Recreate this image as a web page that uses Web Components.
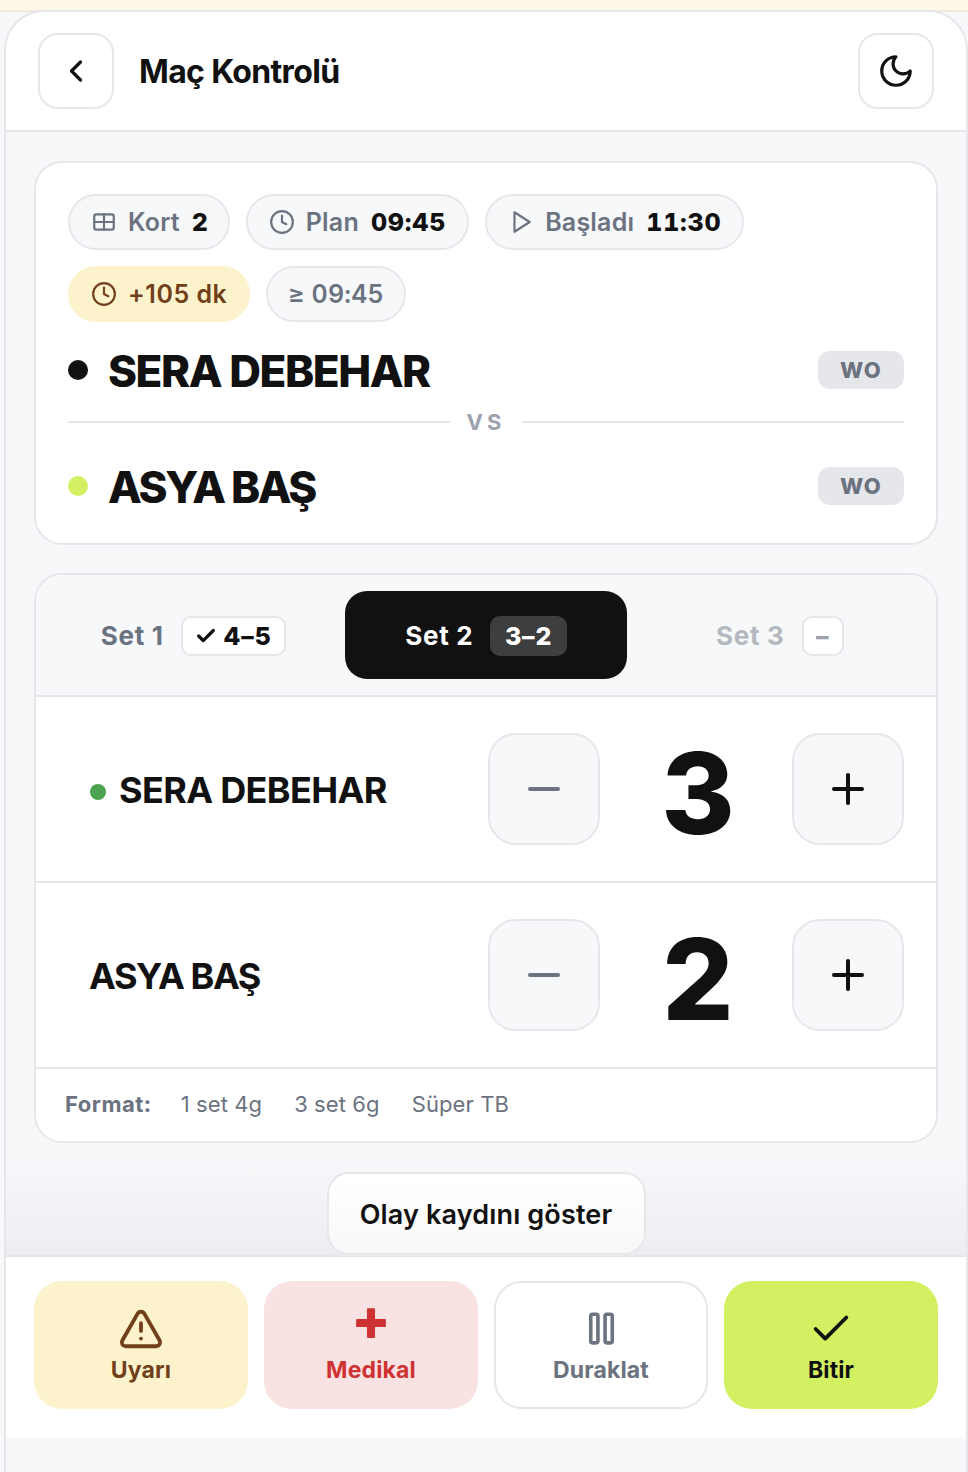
<!DOCTYPE html>
<html lang="tr">
<head>
<meta charset="utf-8">
<title>Maç Kontrolü</title>
<style>
html, body { margin: 0; padding: 0; background: #f7f8fa; }
body { font-family: Inter, "Liberation Sans", sans-serif; color: #111; }
</style>
</head>
<body>
<app-shell>
  <top-bar slot="head" title-text="Maç Kontrolü"></top-bar>

  <match-card>
    <info-chip slot="chips" icon="court" label="Kort" value="2" style="padding-right:19px"></info-chip>
    <info-chip slot="chips" icon="clock" label="Plan" value="09:45"></info-chip>
    <info-chip slot="chips" icon="play" label="Başladı" value="11:30"></info-chip>
    <info-chip slot="chips" tone="warn" icon="clock" label="+105 dk"></info-chip>
    <info-chip slot="chips" label="≥ 09:45" style="padding:0 20px"></info-chip>
    <player-line slot="one" dot="#111111" name="SERA DEBEHAR" style="--track:-1.45px"></player-line>
    <player-line slot="two" dot="#d2f062" name="ASYA BAŞ" style="--track:-2.4px"></player-line>
  </match-card>

  <score-card>
    <set-tab slot="tab1" label="Set 1" score="4–5" done></set-tab>
    <set-tab slot="tab2" label="Set 2" score="3–2" active></set-tab>
    <set-tab slot="tab3" label="Set 3" score="–" muted></set-tab>
    <score-row name="SERA DEBEHAR" score="3" serving style="--track:-.65px"></score-row>
    <score-row name="ASYA BAŞ" score="2" style="--track:-1.45px"></score-row>
    <format-line slot="foot"></format-line>
  </score-card>

  <log-button>Olay kaydını göster</log-button>

  <action-button slot="actions" tone="warn" icon="alert" label="Uyarı"></action-button>
  <action-button slot="actions" tone="med" icon="cross" label="Medikal"></action-button>
  <action-button slot="actions" tone="plain" icon="pause" label="Duraklat"></action-button>
  <action-button slot="actions" tone="go" icon="check" label="Bitir"></action-button>
</app-shell>

<script>
const ICONS = {
  back: '<path d="m15 18-6-6 6-6"/>',
  moon: '<path d="M12 3a6 6 0 0 0 9 9 9 9 0 1 1-9-9Z"/>',
  court: '<rect x="3" y="5" width="18" height="14" rx="2"/><path d="M3 12h18"/><path d="M12 5v14"/>',
  clock: '<circle cx="12" cy="12" r="10"/><path d="M12 6v6l4 2"/>',
  play: '<path d="M6 3l14 9-14 9z"/>',
  check: '<path d="M20 6 9 17l-5-5"/>',
  plus: '<path d="M5 12h14"/><path d="M12 5v14"/>',
  minus: '<path d="M5 12h14"/>',
  alert: '<path d="m21.73 18-8-14a2 2 0 0 0-3.48 0l-8 14A2 2 0 0 0 4 21h16a2 2 0 0 0 1.73-3Z"/><path d="M12 9v4"/><path d="M12 17h.01"/>',
  pause: '<rect x="6" y="4" width="4" height="16" rx="1"/><rect x="14" y="4" width="4" height="16" rx="1"/>',
  cross: '<path fill="currentColor" stroke="none" d="M10.200 3.500h3.600a.5.5 0 0 1 .5.5v5.700h5.700a.5.5 0 0 1 .5.5v3.600a.5.5 0 0 1-.5.5h-5.700V20a.5.5 0 0 1-.5.5h-3.600a.5.5 0 0 1-.5-.5v-5.700H4a.5.5 0 0 1-.5-.5v-3.600a.5.5 0 0 1 .5-.5h5.700V4a.5.5 0 0 1 .5-.5z"/>'
};

function icon(name, size, sw) {
  return `<svg width="${size}" height="${size}" viewBox="0 0 24 24" fill="none" stroke="currentColor" stroke-width="${sw || 2}" stroke-linecap="round" stroke-linejoin="round" aria-hidden="true">${ICONS[name]}</svg>`;
}

class AppShell extends HTMLElement {
  constructor() {
    super();
    this.attachShadow({ mode: 'open' }).innerHTML = `
<style>
:host { display: block; }
.band { height: 10px; background: #fdf8ea; border-bottom: 2px solid #efe9da; }
.frame {
  position: relative; margin: -2px 0 0 4px; height: 1462px; box-sizing: border-box;
  display: flex; flex-direction: column;
  background: #f7f8fa; border: 2px solid #e6e7eb; border-bottom: 0;
  border-radius: 40px 40px 0 0; overflow: hidden;
}
main {
  flex: 1; display: flex; flex-direction: column; align-items: center;
  padding: 29px 28px 0; min-height: 0;
  background: linear-gradient(to bottom, rgba(236,238,241,0) 1020px, #eceef1 100%);
}
.actions {
  display: grid; grid-template-columns: repeat(4, 214px); gap: 16px;
  padding: 24px 28px 28px; background: #fff;
  border-top: 2px solid #e6e7eb;
}
.rest { height: 35px; background: #f7f8fa; }
</style>
<div class="band"></div>
<div class="frame">
  <slot name="head"></slot>
  <main><slot></slot></main>
  <div class="actions"><slot name="actions"></slot></div>
  <div class="rest"></div>
</div>`;
  }
}
customElements.define('app-shell', AppShell);

class TopBar extends HTMLElement {
  constructor() {
    super();
    this.attachShadow({ mode: 'open' }).innerHTML = `
<style>
:host { display: flex; align-items: center; height: 118px; box-sizing: content-box;
  padding: 0 32px; background: #fff; border-bottom: 2px solid #e6e7eb; }
button { width: 76px; height: 76px; box-sizing: border-box; padding: 0; color: #111;
  display: flex; align-items: center; justify-content: center;
  background: #fff; border: 2px solid #e6e7eb; border-radius: 20px; }
h1 { flex: 1; margin: 2px 0 0 25px; font: 700 32px/1 Inter, "Liberation Sans", sans-serif; letter-spacing: -0.65px; color: #111; }
</style>
<button aria-label="Geri">${icon('back', 36, 2.2)}</button>
<h1>${this.getAttribute('title-text')}</h1>
<button aria-label="Tema">${icon('moon', 38, 2)}</button>`;
  }
}
customElements.define('top-bar', TopBar);

class InfoChip extends HTMLElement {
  constructor() {
    super();
    const ic = this.getAttribute('icon');
    const value = this.getAttribute('value');
    this.attachShadow({ mode: 'open' }).innerHTML = `
<style>
:host { display: inline-flex; align-items: center; gap: 11px; height: 56px; box-sizing: border-box;
  padding: 0 21px; background: #f7f8fa; border: 2px solid #e6e7eb; border-radius: 28px;
  color: #6b7280; font: 600 25px/1 Inter, "Liberation Sans", sans-serif; letter-spacing: .2px;
  font-variant-numeric: tabular-nums; white-space: nowrap; }
:host([tone="warn"]) { background: #fcf3cd; border-color: #fcf3cd; color: #713f1a;
  font-variant-numeric: normal; letter-spacing: .5px; }
svg { flex: none; }
b { font-weight: 800; color: #111; margin-left: 1px; letter-spacing: .8px; }
</style>
${ic ? icon(ic, 26, 2) : ''}<span>${this.getAttribute('label')}</span>${value ? `<b>${value}</b>` : ''}`;
  }
}
customElements.define('info-chip', InfoChip);

class PlayerLine extends HTMLElement {
  constructor() {
    super();
    this.attachShadow({ mode: 'open' }).innerHTML = `
<style>
:host { display: flex; align-items: center; height: 44px; }
i { width: 20px; height: 20px; border-radius: 50%; background: ${this.getAttribute('dot')}; flex: none; margin-right: 20px; }
span { flex: 1; font: 800 44px/44px Inter, "Liberation Sans", sans-serif; letter-spacing: var(--track, -1.2px); color: #111; position: relative; top: 1px; }
em { flex: none; width: 86px; height: 38px; border-radius: 12px; background: #e6e7eb; color: #6b7280;
  display: flex; align-items: center; justify-content: center;
  font: 800 22px/1 Inter, "Liberation Sans", sans-serif; font-style: normal; letter-spacing: 1.2px; }
</style>
<i></i><span>${this.getAttribute('name')}</span><em>WO</em>`;
  }
}
customElements.define('player-line', PlayerLine);

class MatchCard extends HTMLElement {
  constructor() {
    super();
    this.attachShadow({ mode: 'open' }).innerHTML = `
<style>
:host { display: block; flex: none; width: 904px; box-sizing: border-box; background: #fff; border: 2px solid #e6e7eb;
  border-radius: 28px; padding: 31px 32px 35px; }
.chips { display: flex; flex-wrap: wrap; gap: 16px; margin-bottom: 26px; max-width: 760px; }
.vs { display: flex; align-items: center; gap: 17px; margin: 18px 0 30px; height: 24px;
  font: 700 22px/1 Inter, "Liberation Sans", sans-serif; letter-spacing: 4px; color: #9ca3af; }
.vs::before, .vs::after { content: ""; flex: 1; height: 2px; background: #e6e7eb; }
</style>
<div class="chips"><slot name="chips"></slot></div>
<slot name="one"></slot>
<div class="vs">VS</div>
<slot name="two"></slot>`;
  }
}
customElements.define('match-card', MatchCard);

class SetTab extends HTMLElement {
  constructor() {
    super();
    const done = this.hasAttribute('done');
    this.attachShadow({ mode: 'open' }).innerHTML = `
<style>
:host { display: flex; align-items: center; justify-content: center; gap: 17px; height: 88px; box-sizing: border-box;
  padding-top: 2px; border-radius: 22px;
  color: #6b7280; font: 700 26px/1 Inter, "Liberation Sans", sans-serif; letter-spacing: .7px; }
:host([active]) { background: #111; color: #fff; }
:host([muted]) { color: #b4b8bf; }
.s { display: inline-flex; align-items: center; gap: 6px; height: 40px; box-sizing: border-box; padding: 0 12.5px;
  border-radius: 10px; background: #fff; border: 2px solid #e6e7eb; color: #111; font-size: 25px; letter-spacing: .8px; font-weight: 800; }
:host([active]) .s { background: #3d3f3e; border-color: #3d3f3e; color: #fff; }
:host([muted]) .s { color: #9ca3af; }
</style>
<span>${this.getAttribute('label')}</span>
<span class="s">${done ? icon('check', 22, 3.6) : ''}${this.getAttribute('score')}</span>`;
  }
}
customElements.define('set-tab', SetTab);

class ScoreRow extends HTMLElement {
  constructor() {
    super();
    const serving = this.hasAttribute('serving');
    this.attachShadow({ mode: 'open' }).innerHTML = `
<style>
:host { display: flex; align-items: center; height: 184px; box-sizing: content-box;
  padding: 0 32px 0 53px; background: #fff; border-top: 2px solid #e6e7eb; }
.name { flex: 1; display: flex; align-items: center; gap: 13px; padding-top: 2px;
  font: 700 36px/1 Inter, "Liberation Sans", sans-serif; letter-spacing: var(--track, -.5px); color: #111; }
.name i { width: 16px; height: 16px; margin: 4px 0 0 1px; border-radius: 50%; background: #4ba350; }
button { width: 112px; height: 112px; box-sizing: border-box; padding: 0; color: #111;
  display: flex; align-items: center; justify-content: center;
  background: #f7f8fa; border: 2px solid #e6e7eb; border-radius: 28px; }
button.down { color: #6b7280; }
output { width: 192px; box-sizing: border-box; padding: 8px 0 0 4px; text-align: center; font: 800 112px/1 Inter, "Liberation Sans", sans-serif; color: #111; }
</style>
<div class="name">${serving ? '<i></i>' : ''}<span>${this.getAttribute('name')}</span></div>
<button class="down" aria-label="Azalt">${icon('minus', 48, 2)}</button>
<output>${this.getAttribute('score')}</output>
<button aria-label="Artır">${icon('plus', 48, 2)}</button>`;
  }
}
customElements.define('score-row', ScoreRow);

class FormatLine extends HTMLElement {
  constructor() {
    super();
    this.attachShadow({ mode: 'open' }).innerHTML = `
<style>
:host { display: flex; align-items: center; gap: 32px; height: 70px; padding: 0 29px 2px;
  border-top: 2px solid #e6e7eb; background: #fff; color: #6b7280;
  font: 400 22px/1 Inter, "Liberation Sans", sans-serif; letter-spacing: .1px; }
b { font-weight: 700; margin-right: -3px; letter-spacing: .5px; }
</style>
<b>Format:</b><span>1 set 4g</span><span>3 set 6g</span><span>Süper TB</span>`;
  }
}
customElements.define('format-line', FormatLine);

class ScoreCard extends HTMLElement {
  constructor() {
    super();
    this.attachShadow({ mode: 'open' }).innerHTML = `
<style>
:host { display: block; flex: none; width: 904px; box-sizing: border-box; margin-top: 28px; background: #fff;
  border: 2px solid #e6e7eb; border-radius: 28px; overflow: hidden; }
.tabs { display: grid; grid-template-columns: 309px 282px 309px; padding: 16px 0; background: #f7f8fa; height: 88px; }
.a { padding-left: 6px; } .c { padding-right: 3px; }
</style>
<div class="tabs">
  <div class="a"><slot name="tab1"></slot></div>
  <div><slot name="tab2"></slot></div>
  <div class="c"><slot name="tab3"></slot></div>
</div>
<slot></slot>
<slot name="foot"></slot>`;
  }
}
customElements.define('score-card', ScoreCard);

class LogButton extends HTMLElement {
  constructor() {
    super();
    this.attachShadow({ mode: 'open' }).innerHTML = `
<style>
:host { display: flex; flex: none; align-items: center; justify-content: center; width: 319px; height: 83px; box-sizing: border-box;
  margin-top: 29px; padding-top: 2px; background: linear-gradient(#fff, #f8f8f9); border: 2px solid #e6e7eb; border-radius: 22px;
  color: #111; font: 600 27px/1 Inter, "Liberation Sans", sans-serif; letter-spacing: .15px; }
</style>
<slot></slot>`;
  }
}
customElements.define('log-button', LogButton);

class ActionButton extends HTMLElement {
  constructor() {
    super();
    const ic = this.getAttribute('icon');
    const size = ic === 'pause' ? 43 : ic === 'cross' ? 42 : 46;
    this.attachShadow({ mode: 'open' }).innerHTML = `
<style>
:host { display: flex; flex-direction: column; align-items: center; justify-content: center; gap: 7px;
  height: 128px; box-sizing: border-box; padding-bottom: 3px; border-radius: 28px; border: 2px solid transparent;
  font: 700 23px/1 Inter, "Liberation Sans", sans-serif; letter-spacing: .15px; }
:host([tone="warn"]) { background: #fcf3cd; color: #713f1a; }
:host([tone="med"]) { background: #f9e2e2; color: #cf3232; }
:host([tone="plain"]) { background: #fff; border-color: #e6e7eb; color: #6b7280; }
:host([tone="go"]) { background: #d2f062; color: #111; }
.art { width: 46px; height: 46px; display: flex; align-items: center; justify-content: center; }
:host([icon="cross"]) svg { margin-top: -12px; }
</style>
<div class="art">${icon(ic, size, 2)}</div><span>${this.getAttribute('label')}</span>`;
  }
}
customElements.define('action-button', ActionButton);
</script>
</body>
</html>
